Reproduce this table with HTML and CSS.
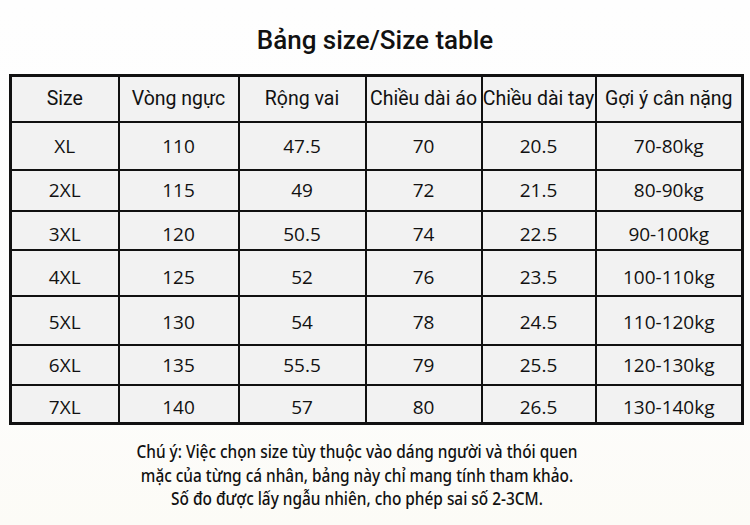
FILE: index.html
```html
<!DOCTYPE html>
<html lang="vi">
<head>
<meta charset="utf-8">
<link rel="stylesheet" href="styles.css">
</head>
<body>
<div class="page">
  <h1 class="title">Bảng size/Size table</h1>
  <table class="size-table">
    <colgroup>
      <col class="c1"><col class="c2"><col class="c3"><col class="c4"><col class="c5"><col class="c6">
    </colgroup>
    <thead>
      <tr class="head">
        <th>Size</th><th>Vòng ngực</th><th>Rộng vai</th><th>Chiều dài áo</th><th>Chiều dài tay</th><th>Gợi ý cân nặng</th>
      </tr>
    </thead>
    <tbody>
      <tr class="r1"><td>XL</td><td>110</td><td>47.5</td><td>70</td><td>20.5</td><td>70-80kg</td></tr>
      <tr class="r2"><td>2XL</td><td>115</td><td>49</td><td>72</td><td>21.5</td><td>80-90kg</td></tr>
      <tr class="r3"><td>3XL</td><td>120</td><td>50.5</td><td>74</td><td>22.5</td><td>90-100kg</td></tr>
      <tr class="r4"><td>4XL</td><td>125</td><td>52</td><td>76</td><td>23.5</td><td>100-110kg</td></tr>
      <tr class="r5"><td>5XL</td><td>130</td><td>54</td><td>78</td><td>24.5</td><td>110-120kg</td></tr>
      <tr class="r6"><td>6XL</td><td>135</td><td>55.5</td><td>79</td><td>25.5</td><td>120-130kg</td></tr>
      <tr class="r7"><td>7XL</td><td>140</td><td>57</td><td>80</td><td>26.5</td><td>130-140kg</td></tr>
    </tbody>
  </table>
  <div class="note">
    <p>Chú ý: Việc chọn size tùy thuộc vào dáng người và thói quen</p>
    <p>mặc của từng cá nhân, bảng này chỉ mang tính tham khảo.</p>
    <p>Số đo được lấy ngẫu nhiên, cho phép sai số 2-3CM.</p>
  </div>
</div>
</body>
</html>
```
FILE: styles.css
```css
html, body {
  margin: 0;
  padding: 0;
}
body {
  width: 750px;
  height: 525px;
  overflow: hidden;
  background: linear-gradient(180deg, #fefefe 0%, #fdfdfc 70%, #fcfbf6 100%);
  color: #111;
}
.page {
  padding: 22px 9px 0 9px;
}
.title {
  margin: 0;
  height: 36px;
  line-height: 36px;
  text-align: center;
  font-family: Roboto, "Liberation Sans", sans-serif;
  font-weight: 500;
  font-size: 26px;
  color: #111;
}
.size-table {
  margin-top: 16px;
  width: 732px;
  border-collapse: collapse;
  table-layout: fixed;
  border: 3px solid #111;
  background: #f2f2f2;
}
.c1 { width: 108px; }
.c2 { width: 120px; }
.c3 { width: 127px; }
.c4 { width: 116px; }
.c5 { width: 114px; }
.c6 { width: 147px; }
.size-table th,
.size-table td {
  border: 2px solid #111;
  padding: 0;
  text-align: center;
  vertical-align: middle;
  white-space: nowrap;
  overflow: visible;
  box-sizing: border-box;
}
.size-table th {
  font-family: Roboto, "Liberation Sans", sans-serif;
  font-weight: 400;
  font-size: 19.5px;
  height: 46px;
}
.size-table td {
  font-family: "Open Sans", "Noto Sans", sans-serif;
  font-size: 19px;
}
.r1 td { height: 48px; }
.r2 td { height: 41px; }
.r3 td { height: 39px; padding-top: 8px; }
.r4 td { height: 46px; padding-top: 8px; }
.r5 td { height: 49px; padding-top: 3px; }
.r6 td { height: 40px; }
.r7 td { height: 39px; padding-top: 6px; }
.note {
  margin-top: 15px;
  padding-right: 36px;
  text-align: center;
  font-family: "Noto Sans", "Open Sans", sans-serif;
  font-weight: 500;
  font-size: 17.5px;
  line-height: 23.5px;
  color: #111;
}
.note p {
  margin: 0;
  transform: scaleX(0.88);
  transform-origin: 50% 50%;
}
```
